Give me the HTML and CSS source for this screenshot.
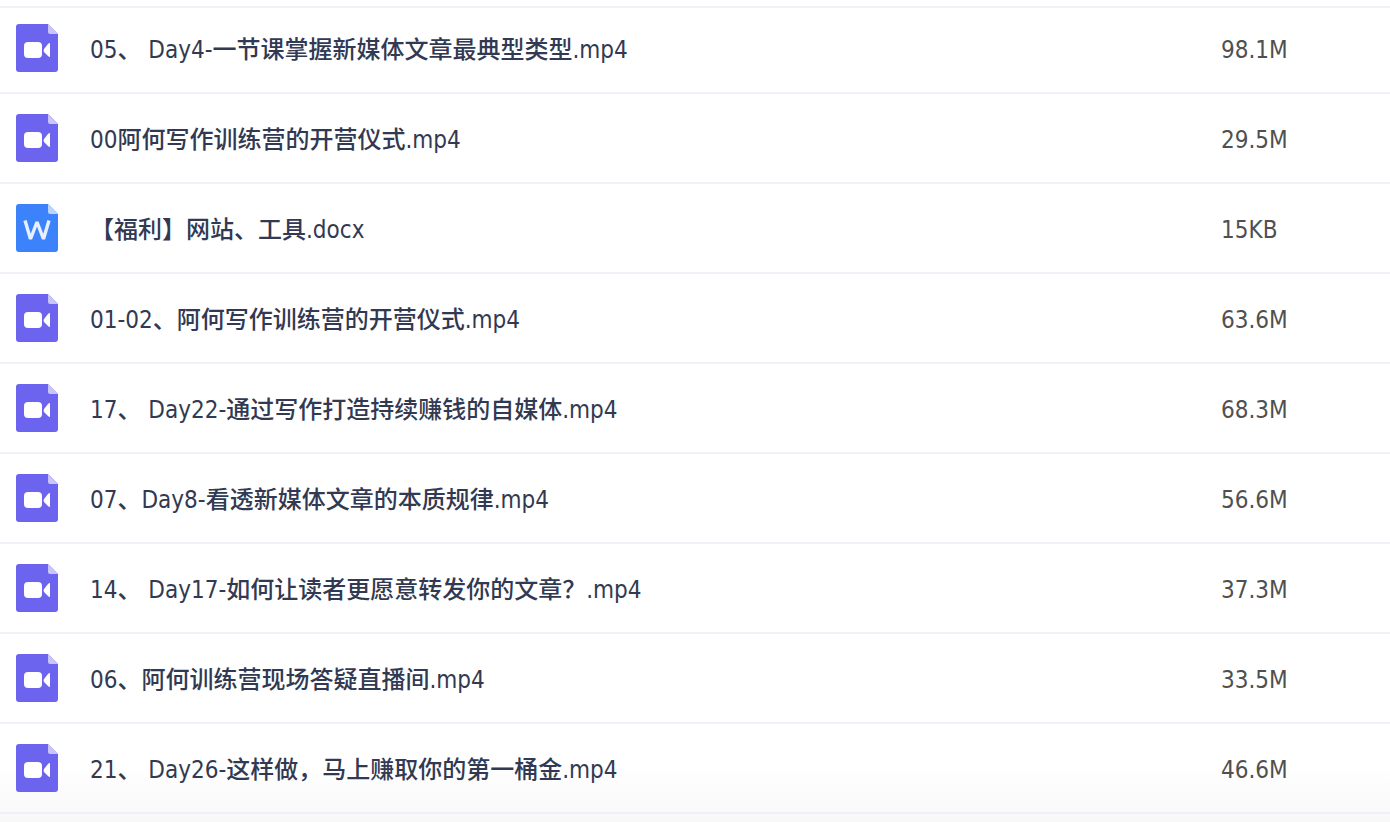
FILE: index.html
```html
<!DOCTYPE html>
<html lang="zh-CN">
<head>
<meta charset="utf-8">
<title>文件列表</title>
<link rel="stylesheet" href="styles.css">
</head>
<body>
<svg class="symbols" aria-hidden="true">
  <symbol id="video" viewBox="0 0 42 48">
    <path fill="#6c63ee" d="M3 0H32L42 10V45a3 3 0 0 1-3 3H3a3 3 0 0 1-3-3V3a3 3 0 0 1 3-3z"/>
    <path fill="#c9c5fa" d="M32 0L42 10H34a2 2 0 0 1-2-2z"/>
    <rect x="8" y="18" width="18" height="16" rx="4" fill="#fff"/>
    <path fill="#fff" d="M28 25L32 20Q34 18 34 20V32Q34 34 32 32L28 28Q27 26.500 28 25z"/>
  </symbol>
  <symbol id="word" viewBox="0 0 42 48">
    <path fill="#3b82fb" d="M3 0H32L42 10V45a3 3 0 0 1-3 3H3a3 3 0 0 1-3-3V3a3 3 0 0 1 3-3z"/>
    <path fill="#b9d5fe" d="M32 0L42 10H34a2 2 0 0 1-2-2z"/>
    <path fill="none" stroke="#e6f0ff" stroke-width="3.400" stroke-linejoin="bevel" d="M9 16.500L14.500 35L21 18L27.500 35L33 16.500"/>
  </symbol>
</svg>
<main class="files">
<table class="list">
  <colgroup><col><col class="size-col"></colgroup>
  <tbody>
  <tr><td><div class="file"><svg class="icon"><use href="#video"/></svg><span class="name">05、 Day4-一节课掌握新媒体文章最典型类型.mp4</span></div></td><td class="size">98.1M</td></tr>
  <tr><td><div class="file"><svg class="icon"><use href="#video"/></svg><span class="name">00阿何写作训练营的开营仪式.mp4</span></div></td><td class="size">29.5M</td></tr>
  <tr><td><div class="file"><svg class="icon"><use href="#word"/></svg><span class="name">【福利】网站、工具.docx</span></div></td><td class="size">15KB</td></tr>
  <tr><td><div class="file"><svg class="icon"><use href="#video"/></svg><span class="name">01-02、阿何写作训练营的开营仪式.mp4</span></div></td><td class="size">63.6M</td></tr>
  <tr><td><div class="file"><svg class="icon"><use href="#video"/></svg><span class="name">17、 Day22-通过写作打造持续赚钱的自媒体.mp4</span></div></td><td class="size">68.3M</td></tr>
  <tr><td><div class="file"><svg class="icon"><use href="#video"/></svg><span class="name">07、Day8-看透新媒体文章的本质规律.mp4</span></div></td><td class="size">56.6M</td></tr>
  <tr><td><div class="file"><svg class="icon"><use href="#video"/></svg><span class="name">14、 Day17-如何让读者更愿意转发你的文章？.mp4</span></div></td><td class="size">37.3M</td></tr>
  <tr><td><div class="file"><svg class="icon"><use href="#video"/></svg><span class="name">06、阿何训练营现场答疑直播间.mp4</span></div></td><td class="size">33.5M</td></tr>
  <tr><td><div class="file"><svg class="icon"><use href="#video"/></svg><span class="name">21、 Day26-这样做，马上赚取你的第一桶金.mp4</span></div></td><td class="size">46.6M</td></tr>
  </tbody>
</table>
</main>
</body>
</html>
```
FILE: styles.css
```css
body {
  margin: 0;
  background: #fff;
  font-family: "DejaVu Sans Condensed", "Noto Sans CJK SC", sans-serif;
  font-size: 24px;
  font-weight: 500;
  line-height: 32px;
}

.symbols {
  display: none;
}

.files {
  padding: 6px 0 8px;
  background: linear-gradient(to top, #f8f8f9, #fff 60px);
}

.list {
  width: 100%;
  table-layout: fixed;
  border-spacing: 0;
  border-top: 2px solid #eff1f6;
}

.size-col {
  width: 169px;
}

.list td {
  padding: 20px 0;
  border-bottom: 2px solid #eff1f6;
}

.list tr:first-child td {
  padding-top: 16px;
}

.file {
  display: flex;
  align-items: center;
  gap: 32px;
  padding-left: 16px;
}

.icon {
  flex: none;
  width: 42px;
  height: 48px;
}

.name {
  padding-top: 4px;
  color: #323952;
}

.list .size {
  padding-top: 24px;
  color: #505050;
}

.list tr:first-child .size {
  padding-top: 20px;
}
```
